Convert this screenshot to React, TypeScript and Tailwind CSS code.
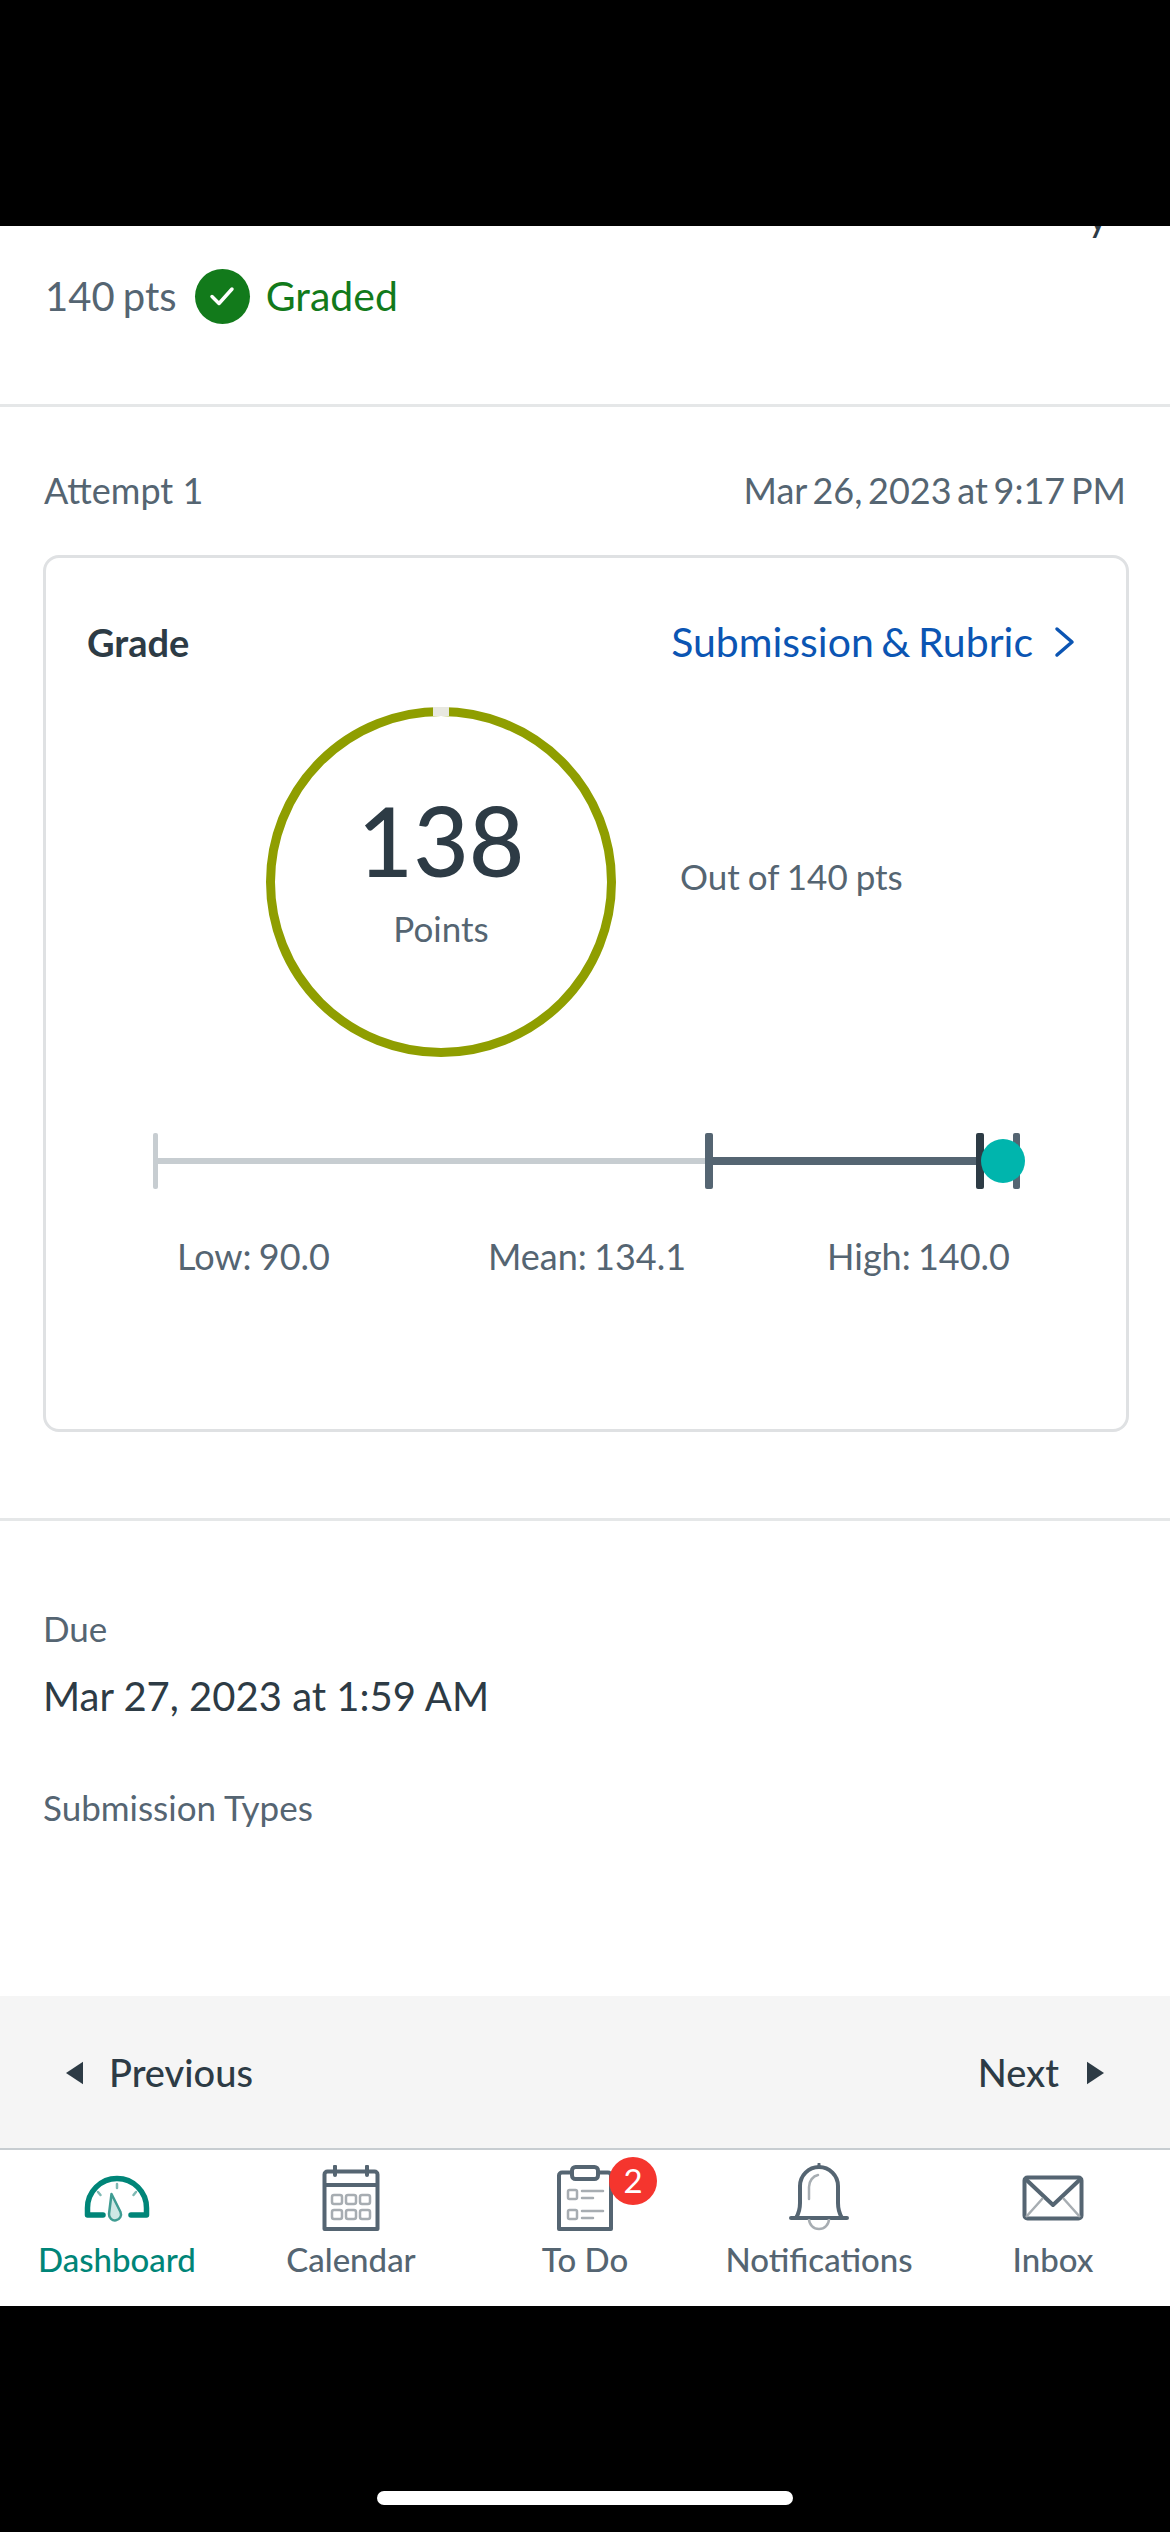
function GaugeIcon() {
  return (
    <svg width="70" height="50" viewBox="0 0 70 50" fill="none">
      <path d="M21 42H5.500V35A29.500 29.500 0 0 1 64.500 35V42H49" stroke="#008578" strokeWidth="5.500" strokeLinecap="round" strokeLinejoin="round" />
      <path d="M35 11V15M16 19L18.500 22M54 19L51.500 22" stroke="#7fb9b3" strokeWidth="2.500" strokeLinecap="round" />
      <path d="M29.500 21L38.500 39A6 6 0 1 1 27 41Z" fill="#cfe8e5" stroke="#3f9c92" strokeWidth="2.500" strokeLinejoin="round" />
    </svg>
  );
}

function CalendarIcon() {
  return (
    <svg width="58" height="66" viewBox="0 0 58 66" fill="none">
      <path d="M2.500 64V9.500A3 3 0 0 1 5.500 6.500H52.500A3 3 0 0 1 55.500 9.500V64ZM2.500 20H55.500" stroke="#556572" strokeWidth="4" strokeLinejoin="round" />
      <path d="M13 1.500V10M45 1.500V10" stroke="#556572" strokeWidth="4" strokeLinecap="round" />
      <g stroke="#a7adb2" strokeWidth="2.500">
        <rect x="10" y="30" width="10" height="9" rx="2" />
        <rect x="24" y="30" width="10" height="9" rx="2" />
        <rect x="38" y="30" width="10" height="9" rx="2" />
        <rect x="10" y="45" width="10" height="9" rx="2" />
        <rect x="24" y="45" width="10" height="9" rx="2" />
        <rect x="38" y="45" width="10" height="9" rx="2" />
      </g>
    </svg>
  );
}

function ClipboardIcon() {
  return (
    <svg width="56" height="66" viewBox="0 0 56 66" fill="none">
      <path d="M14 7.500H5A3 3 0 0 0 2 10.500V64H54V10.500A3 3 0 0 0 51 7.500H42" stroke="#556572" strokeWidth="4" strokeLinejoin="round" />
      <rect x="15" y="2" width="26" height="12" rx="3.500" stroke="#556572" strokeWidth="4" />
      <g stroke="#a7adb2" strokeWidth="2.500">
        <rect x="11" y="25" width="9" height="9" rx="1.500" />
        <rect x="11" y="45" width="9" height="9" rx="1.500" />
        <path d="M25 26H46M25 33H36M25 46H46M25 53H36" strokeLinecap="round" />
      </g>
    </svg>
  );
}

function BellIcon() {
  return (
    <svg width="62" height="68" viewBox="0 0 62 68" fill="none">
      <path d="M3 55H59M8 55C11 50 12 46 12 40V23A19 19 0 0 1 50 23V40C50 46 51 50 54 55" stroke="#556572" strokeWidth="4" strokeLinecap="round" strokeLinejoin="round" />
      <path d="M31 1V4" stroke="#556572" strokeWidth="3" strokeLinecap="round" />
      <path d="M21 36V24C21 18 25 13 30 12" stroke="#a7adb2" strokeWidth="2.500" strokeLinecap="round" />
      <path d="M21 56A10 10 0 0 0 41 56" stroke="#a7adb2" strokeWidth="2.500" />
    </svg>
  );
}

function InboxIcon() {
  return (
    <svg width="62" height="46" viewBox="0 0 62 46" fill="none">
      <rect x="2.500" y="2.500" width="57" height="41" rx="3" stroke="#556572" strokeWidth="4" />
      <path d="M3.500 4L31 30L58.500 4" stroke="#556572" strokeWidth="4" strokeLinejoin="round" />
      <path d="M4 42L21 23M58 42L41 23" stroke="#a7adb2" strokeWidth="2.500" />
    </svg>
  );
}

const tabs = [
  { label: "Dashboard", icon: <GaugeIcon />, top: "pt-[23px]", active: true },
  { label: "Calendar", icon: <CalendarIcon />, top: "pt-[15px]" },
  { label: "To Do", icon: <ClipboardIcon />, top: "pt-[15px]", badge: 2 },
  { label: "Notifications", icon: <BellIcon />, top: "pt-[13px]" },
  { label: "Inbox", icon: <InboxIcon />, top: "pt-[25px]" },
];

function ScoreRing() {
  return (
    <svg width="350" height="350" viewBox="0 0 350 350" fill="none">
      <circle cx="175" cy="175" r="170.500" stroke="#8f9e00" strokeWidth="9" />
      <rect x="167" y="0" width="16" height="9" fill="#e8e8e0" />
    </svg>
  );
}

function RangeBar() {
  return (
    <svg width="880" height="56" viewBox="0 0 880 56" fill="none">
      <rect x="3" y="25" width="553" height="6" fill="#c7cdd1" />
      <rect x="2" y="0" width="5" height="56" rx="2" fill="#c7cdd1" />
      <rect x="556" y="24" width="270" height="8" fill="#556572" />
      <rect x="554" y="0" width="8" height="56" rx="2" fill="#556572" />
      <rect x="825" y="0" width="8" height="56" rx="2" fill="#2d3b45" />
      <rect x="862" y="0" width="7" height="56" rx="2" fill="#556572" />
      <circle cx="852" cy="28" r="22" fill="#00b5ad" />
    </svg>
  );
}

export default function App() {
  return (
    <div className="flex flex-col w-[1170px] h-[2532px] bg-black font-['Lato','Liberation_Sans',sans-serif] overflow-hidden">
      <div className="h-[226px] shrink-0 bg-black" />

      <div className="flex flex-col flex-1 bg-white">
        <div className="h-[16px] overflow-hidden flex justify-end pr-[62px]">
          <span className="text-[40px] leading-[40px] -mt-[30px] text-[#2d3b45]">y</span>
        </div>

        <div className="flex items-center h-[108px] pl-[45px]">
          <span className="text-[40px] text-[#556572] [word-spacing:-2px]">140 pts</span>
          <span className="ml-[18px] flex items-center justify-center w-[55px] h-[55px] rounded-full bg-[#127a1b]">
            <svg width="28" height="24" viewBox="0 0 28 24" fill="none">
              <path d="M4 12.500L11 19.500L24 5" stroke="white" strokeWidth="3.500" strokeLinecap="round" strokeLinejoin="round" />
            </svg>
          </span>
          <span className="ml-[16px] text-[41px] text-[#127a1b]">Graded</span>
        </div>

        <div className="mt-[54px] h-[3px] bg-[#e5e7e8]" />

        <div className="flex justify-between items-center mt-[61px] px-[44px] h-[44px] text-[36px] text-[#556572] [word-spacing:-3.500px]">
          <span className="[word-spacing:0px]">Attempt 1</span>
          <span>Mar 26, 2023 at 9:17 PM</span>
        </div>

        <div className="ml-[43px] mr-[41px] mt-[43px] h-[877px] border-[3px] border-[#dfe1e3] rounded-[16px] flex flex-col">
          <div className="flex justify-between items-center mt-[60px] pl-[41px] pr-[50px] h-[48px]">
            <span className="text-[38px] font-bold text-[#2d3b45]">Grade</span>
            <span className="flex items-center gap-[21px] text-[41px] text-[#0b55b3] [word-spacing:-3px]">
              Submission &amp; Rubric
              <svg width="22" height="32" viewBox="0 0 22 32" fill="none">
                <path d="M3 3L18 16L3 29" stroke="#0b55b3" strokeWidth="3.500" strokeLinecap="round" strokeLinejoin="round" />
              </svg>
            </span>
          </div>

          <div className="flex items-center mt-[41px] pl-[220px]">
            <div className="relative w-[350px] h-[350px]">
              <ScoreRing />
              <div className="absolute inset-0 flex flex-col items-center">
                <span className="mt-[73px] text-[96px] leading-[120px] font-medium text-[#2d3b45]">138</span>
                <span className="mt-[6px] text-[35px] leading-[44px] text-[#556572]">Points</span>
              </div>
            </div>
            <span className="ml-[64px] -mt-[12px] text-[35px] text-[#556572] [word-spacing:-1px]">Out of 140 pts</span>
          </div>

          <div className="mt-[76px] pl-[105px]">
            <RangeBar />
          </div>

          <div className="flex mt-[45px] text-[36px] leading-[44px] text-[#556572] [word-spacing:-2px]">
            <span className="ml-[131px]">Low: 90.0</span>
            <span className="ml-[158px]">Mean: 134.1</span>
            <span className="ml-[141px]">High: 140.0</span>
          </div>
        </div>

        <div className="mt-[86px] h-[3px] bg-[#e5e7e8]" />

        <div className="flex flex-col px-[43px] pt-[85px]">
          <span className="text-[35px] leading-[44px] text-[#556572]">Due</span>
          <span className="mt-[24px] text-[40px] leading-[44px] text-[#2d3b45]">Mar 27, 2023 at 1:59 AM</span>
          <span className="mt-[67px] text-[35px] leading-[44px] text-[#556572]">Submission Types</span>
        </div>

        <div className="mt-auto h-[154px] flex items-center justify-between bg-[#f5f5f5] border-b-2 border-[#c7cdd1] pl-[66px] pr-[66px] pt-[1px]">
          <span className="flex items-center gap-[26px] text-[38px] font-medium text-[#2d3b45]">
            <svg width="17" height="24" viewBox="0 0 18 24"><path d="M18 0V24L0 12Z" fill="#2d3b45" /></svg>
            Previous
          </span>
          <span className="flex items-center gap-[28px] text-[38px] font-medium text-[#2d3b45]">
            Next
            <svg width="17" height="24" viewBox="0 0 18 24"><path d="M0 0V24L18 12Z" fill="#2d3b45" /></svg>
          </span>
        </div>

        <div className="h-[156px] grid grid-cols-5">
          {tabs.map((tab) => (
            <div key={tab.label} className="flex flex-col items-center">
              <div className={`relative h-[88px] flex items-start justify-center ${tab.top}`}>
                {tab.icon}
                {tab.badge && (
                  <span className="absolute top-[7px] -right-[44px] flex items-center justify-center w-[48px] h-[48px] rounded-full bg-[#f5352e] text-white text-[33px]">
                    {tab.badge}
                  </span>
                )}
              </div>
              <span className={`mt-[1px] text-[33px] leading-[40px] font-medium ${tab.active ? "text-[#008578]" : "text-[#556572]"}`}>
                {tab.label}
              </span>
            </div>
          ))}
        </div>
      </div>

      <div className="h-[226px] shrink-0 flex justify-center items-end pb-[27px] bg-black">
        <div className="w-[416px] h-[14px] rounded-full bg-white" />
      </div>
    </div>
  );
}
